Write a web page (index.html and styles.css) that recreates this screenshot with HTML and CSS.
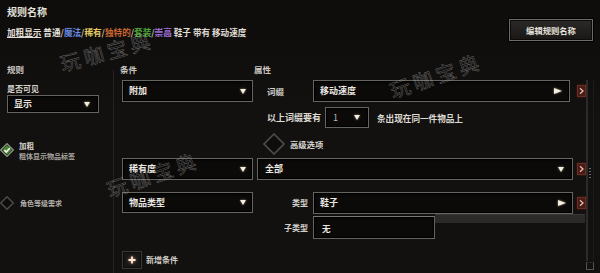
FILE: index.html
```html
<!DOCTYPE html>
<html lang="zh-CN">
<head>
<meta charset="utf-8">
<title>规则名称</title>
<link rel="stylesheet" href="styles.css">
</head>
<body>
<div class="page">
  <header class="header">
    <div class="titles">
      <div class="title">规则名称</div>
      <div class="summary"><span class="u">加粗显示</span> <span class="c-normal">普通</span><span class="sl">/</span><span class="c-magic">魔法</span><span class="sl">/</span><span class="c-rare">稀有</span><span class="sl">/</span><span class="c-unique">独特的</span><span class="sl">/</span><span class="c-set">套装</span><span class="sl">/</span><span class="c-exalt">崇高</span> 鞋子 带有 移动速度</div>
    </div>
    <button class="edit-btn">编辑规则名称</button>
  </header>

  <main class="main">
    <section class="rules">
      <div class="col-head">规则</div>
      <div class="field-label">是否可见</div>
      <div class="select sel-visible"><span>显示</span><svg class="tri-d" width="6" height="5" viewBox="0 0 6 5"><polygon points="0,0 6,0 3,5"/></svg></div>

      <div class="check-row bold-check">
        <svg class="dia-sm" width="14" height="14" viewBox="0 0 14 14">
          <polygon points="7,0.6 13.4,7 7,13.4 0.6,7" fill="#26401f" stroke="#8d9888" stroke-width="1.2"/>
          <polygon points="7,2.6 11.4,7 7,11.4 2.6,7" fill="#4a8a36"/>
          <path d="M4.3 7.1 L6.3 9.1 L9.9 5" fill="none" stroke="#f2f2ea" stroke-width="1.6"/>
        </svg>
        <div class="check-text">
          <div class="check-title">加粗</div>
          <div class="check-sub">粗体显示物品标签</div>
        </div>
      </div>

      <div class="check-row level-check">
        <svg class="dia-sm" width="14" height="14" viewBox="0 0 14 14">
          <polygon points="7,0.8 13.2,7 7,13.2 0.8,7" fill="#0d0c0b" stroke="#4c4a47" stroke-width="1.5"/>
        </svg>
        <div class="check-sub level-text">角色等级需求</div>
      </div>
    </section>

    <div class="divider"></div>

    <section class="conds">
      <div class="cond-heads"><span class="h-cond">条件</span><span class="h-attr">属性</span></div>

      <div class="cond-row row1">
        <div class="select cond-sel"><span>附加</span><svg class="tri-d" width="6" height="5" viewBox="0 0 6 5"><polygon points="0,0 6,0 3,5"/></svg></div>
        <div class="attr">
          <div class="attr-grid">
            <span class="attr-label left">词缀</span>
            <div class="select attr-sel sel-r1"><span>移动速度</span><svg class="tri-r" width="8" height="6" viewBox="0 0 8 6"><polygon points="0,0 8,3 0,6"/></svg></div>
            <span class="red-btn"><svg width="9" height="12" viewBox="0 0 9 12"><path d="M3 3.2 L6 6 L3 8.8" fill="none" stroke="#e0bfae" stroke-width="1.3"/></svg></span>
          </div>
          <div class="count-row">
            <span>以上词缀要有</span>
            <div class="select sel-count"><span class="num">1</span><svg class="tri-d" width="6" height="5" viewBox="0 0 6 5"><polygon points="0,0 6,0 3,5"/></svg></div>
            <span class="count-tail">条出现在同一件物品上</span>
          </div>
          <div class="adv-row">
            <svg width="22" height="22" viewBox="0 0 22 22">
              <polygon points="11,1 21,11 11,21 1,11" fill="#0e0d0c" stroke="#4e4c49" stroke-width="1.6"/>
            </svg>
            <span class="adv-text">高级选项</span>
          </div>
        </div>
      </div>

      <div class="cond-row row2">
        <div class="select cond-sel"><span>稀有度</span><svg class="tri-d" width="6" height="5" viewBox="0 0 6 5"><polygon points="0,0 6,0 3,5"/></svg></div>
        <div class="attr">
          <div class="attr-grid full">
            <div class="select attr-sel sel-all"><span>全部</span><svg class="tri-d" width="6" height="5" viewBox="0 0 6 5"><polygon points="0,0 6,0 3,5"/></svg></div>
            <span class="red-btn"><svg width="9" height="12" viewBox="0 0 9 12"><path d="M3 3.2 L6 6 L3 8.8" fill="none" stroke="#e0bfae" stroke-width="1.3"/></svg></span>
          </div>
        </div>
      </div>

      <div class="cond-row row3">
        <div class="select cond-sel sel-short"><span>物品类型</span><svg class="tri-d" width="6" height="5" viewBox="0 0 6 5"><polygon points="0,0 6,0 3,5"/></svg></div>
        <div class="attr">
          <div class="attr-grid">
            <span class="attr-label right">类型</span>
            <div class="select attr-sel sel-short"><span>鞋子</span><svg class="tri-r" width="8" height="6" viewBox="0 0 8 6"><polygon points="0,0 8,3 0,6"/></svg></div>
            <span class="red-btn"><svg width="9" height="12" viewBox="0 0 9 12"><path d="M3 3.2 L6 6 L3 8.8" fill="none" stroke="#e0bfae" stroke-width="1.3"/></svg></span>
          </div>
          <div class="sub-grid">
            <span class="attr-label right">子类型</span>
            <div class="select sel-sub"><span class="wu">无</span></div>
            <div class="ghost-bar"></div>
          </div>
        </div>
      </div>

      <div class="add-row">
        <span class="add-btn"><svg width="8" height="8" viewBox="0 0 8 8"><path d="M4 0.5 V7.5 M0.5 4 H7.5" stroke="#fbe9dc" stroke-width="1.8"/></svg></span>
        <span class="add-text">新增条件</span>
      </div>
    </section>

    <div class="scroll">
      <div class="track"></div>
      <div class="scroll-end"></div>
    </div>
  </main>

  <div class="wm wm1">玩咖宝典</div>
  <div class="wm wm2">玩咖宝典</div>
  <div class="wm wm3">玩咖宝典</div>
</div>
</body>
</html>
```

FILE: styles.css
```css
* { box-sizing: border-box; margin: 0; padding: 0; }

html, body {
  width: 600px;
  height: 273px;
  overflow: hidden;
}

body {
  background: #100f0e;
  font-family: "Noto Sans CJK SC", "Noto Sans", sans-serif;
  font-weight: 700;
  color: #dcd8d2;
}

.page {
  position: relative;
  width: 600px;
  height: 273px;
  display: flex;
  flex-direction: column;
  background: linear-gradient(180deg, #0d0c0b 0%, #121110 40%, #121110 100%);
}

/* header */
.header {
  height: 60px;
  flex: none;
  display: flex;
  justify-content: space-between;
  align-items: flex-start;
  padding: 5px 7px 0 7px;
}

.title {
  font-size: 10px;
  line-height: 13px;
  color: #e4e1dc;
}

.summary {
  margin-top: 8px;
  font-size: 8.6px;
  line-height: 12px;
  color: #e0dcd6;
  white-space: nowrap;
}

.u { text-decoration: underline; text-underline-offset: 1px; }
.sl { color: #b8b4ae; }
.c-normal { color: #e6e3de; }
.c-magic { color: #6b8fe6; }
.c-rare { color: #e3c962; }
.c-unique { color: #c9652f; }
.c-set { color: #4fa63b; }
.c-exalt { color: #a275de; }

.edit-btn {
  margin-top: 14px;
  width: 84px;
  height: 22px;
  border: 1px solid #6e6c69;
  background: linear-gradient(180deg, #2b2a29 0%, #181716 100%);
  box-shadow: 0 0 0 1px #000, inset 0 0 0 1px #0c0b0a;
  color: #e6e2dc;
  font-family: "Noto Sans CJK SC", sans-serif;
  font-weight: 700;
  font-size: 8.3px;
  line-height: 20px;
}

/* main */
.main {
  flex: 1;
  display: flex;
  padding-right: 6px;
}

.rules {
  width: 113px;
  flex: none;
}

.col-head {
  margin-top: 3px;
  padding-left: 7px;
  font-size: 8.5px;
  line-height: 12px;
  color: #cbc7c1;
}

.field-label {
  margin-top: 8px;
  padding-left: 7px;
  font-size: 8px;
  line-height: 11px;
  color: #d6d2cc;
}

/* select */
.select {
  display: flex;
  align-items: center;
  justify-content: space-between;
  padding: 0 6px 0 6px;
  border: 1px solid #66645f;
  background: #0b0a09;
  box-shadow: inset 0 0 0 1px #000, inset 0 1px 3px rgba(0, 0, 0, 0.8);
  font-size: 9px;
  line-height: 12px;
  color: #ebe7e1;
  white-space: nowrap;
}

.tri-d polygon, .tri-r polygon { fill: #f4eee2; }
.tri-d, .tri-r { flex: none; filter: drop-shadow(0 0 1px rgba(255, 220, 170, 0.6)); }

.sel-visible {
  margin: 1px 0 0 7px;
  width: 92px;
  height: 18px;
  padding-right: 8px;
}

.check-row {
  display: flex;
  align-items: flex-start;
}

.bold-check { margin-top: 27px; }
.bold-check .dia-sm { margin-top: 3px; }

.check-text { margin-left: 5px; }

.check-title {
  font-size: 7.5px;
  line-height: 11px;
  color: #d4d0ca;
}

.check-sub {
  font-size: 7px;
  line-height: 11px;
  color: #aaa6a0;
}

.level-check {
  margin-top: 34px;
  align-items: center;
}

.level-text {
  margin-left: 6px;
  line-height: 13px;
  color: #b4b0aa;
}

.dia-sm { flex: none; }

.divider {
  width: 1px;
  flex: none;
  margin-top: 10px;
  background: #252321;
}

/* conditions */
.conds {
  flex: 1;
  padding-left: 8px;
}

.cond-heads {
  margin-top: 3px;
  display: flex;
  font-size: 8.5px;
  line-height: 12px;
  color: #cbc7c1;
}

.h-cond { margin-left: -2px; width: 134px; }

.cond-row {
  display: flex;
  align-items: flex-start;
  gap: 4px;
}

.row1 { margin-top: 5px; }
.row2 { margin-top: 3px; }
.row3 { margin-top: 12px; }

.cond-sel {
  width: 131px;
  height: 22px;
  flex: none;
}

.sel-short { height: 21px; }

.attr {
  flex: 1;
  min-width: 0;
}

.attr-grid {
  display: grid;
  grid-template-columns: 56px 1fr 13px;
  align-items: center;
}

.attr-grid.full { grid-template-columns: 1fr 13px; }

.attr-label {
  font-size: 8px;
  line-height: 12px;
  color: #d4d0ca;
}

.attr-label.left { padding-left: 10px; font-size: 8.5px; }
.attr-label.right { text-align: right; padding-right: 5px; }

.attr-sel {
  height: 22px;
}

.sel-r1 { margin-right: 3px; padding-right: 7px; }
.sel-all { padding-left: 7px; padding-right: 8px; }

.red-btn {
  justify-self: end;
  width: 9px;
  height: 12px;
  display: flex;
  background: #4a1b16;
  border: 1px solid #6c2c24;
  box-shadow: 0 0 2px rgba(160, 60, 40, 0.4);
}

.red-btn svg { margin: -1px; }

.count-row {
  margin-top: 5px;
  height: 21px;
  display: flex;
  align-items: center;
  padding-left: 10px;
  font-size: 9px;
  line-height: 12px;
  color: #dedad4;
}

.sel-count {
  margin-left: 4px;
  width: 44px;
  height: 21px;
  padding-left: 7px;
  padding-right: 8px;
}

.num { font-weight: 400; color: #bdb9b3; }

.count-tail { margin-left: 8px; font-size: 8.6px; }

.adv-row {
  margin-top: 5px;
  height: 22px;
  display: flex;
  align-items: center;
  padding-left: 6px;
}

.adv-text {
  margin-left: 5px;
  font-size: 8.3px;
  line-height: 12px;
  color: #d6d2cc;
}

.sub-grid {
  position: relative;
  margin-top: 2px;
  display: grid;
  grid-template-columns: 56px 122px;
  align-items: center;
}

.sel-sub {
  height: 23px;
  padding-left: 8px;
  border-top-color: #7a7873;
}

.wu { font-size: 8.5px; }

.ghost-bar {
  position: absolute;
  left: 178px;
  top: -2px;
  width: 150px;
  height: 9px;
  background: #2b2a28;
  border-top: 1px solid #3a3835;
}

.add-row {
  margin-top: 12px;
  display: flex;
  align-items: center;
}

.add-btn {
  width: 20px;
  height: 18px;
  display: flex;
  align-items: center;
  justify-content: center;
  border: 1px solid #3a3835;
  background: #1a1817;
  box-shadow: inset 0 0 3px #000;
}

.add-btn svg { filter: drop-shadow(0 0 1.5px rgba(255, 170, 120, 0.8)); }

.add-text {
  margin-left: 4px;
  font-size: 8px;
  line-height: 12px;
  color: #d2cec8;
}

/* scrollbar */
.scroll {
  width: 8px;
  flex: none;
  display: flex;
  flex-direction: column;
  margin-top: 20px;
}

.track {
  position: relative;
  flex: 1;
  border-left: 2px solid #2d2b29;
  border-right: 1px solid #1d1b1a;
}

.track::after {
  content: "";
  position: absolute;
  left: 1px;
  top: 88px;
  width: 2px;
  height: 12px;
  background: repeating-linear-gradient(180deg, #6a6864 0 1px, transparent 1px 3px);
}

.scroll-end {
  margin: 1px 0 3px 0;
  width: 8px;
  height: 8px;
  border: 1px solid #55534f;
  border-top-color: #2a2826;
}

/* watermark */
.wm {
  position: absolute;
  width: 100px;
  font-family: "Noto Sans CJK SC", sans-serif;
  font-weight: 400;
  font-size: 20px;
  line-height: 26px;
  letter-spacing: 4px;
  white-space: nowrap;
  color: transparent;
  -webkit-text-stroke: 0.45px rgba(200, 200, 200, 0.5);
  pointer-events: none;
}

.wm1 { left: 59px; top: 38px; transform: rotate(-15deg); }
.wm2 { left: 388px; top: 62px; transform: rotate(-19deg); }
.wm3 { left: 105px; top: 161px; transform: rotate(-19deg); }
```
